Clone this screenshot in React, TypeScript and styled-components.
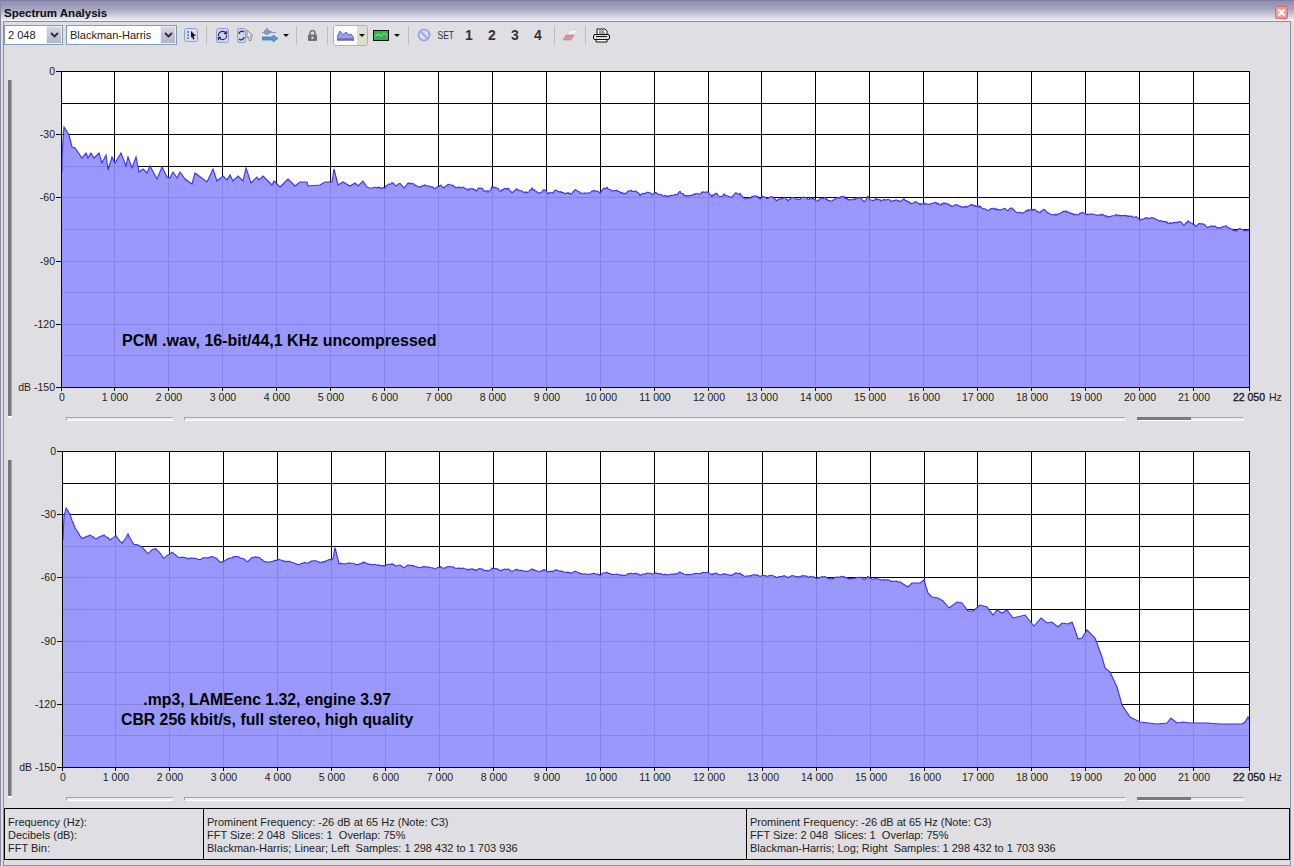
import React from "react";
import styled, { createGlobalStyle } from "styled-components";
import { RefreshCw } from "lucide-react";

const GlobalStyle = createGlobalStyle`
  html, body { margin: 0; padding: 0; background: #dfdfe3; }
  * { box-sizing: border-box; }
`;

const Win = styled.div`
  width: 1294px;
  height: 866px;
  overflow: hidden;
  display: flex;
  flex-direction: column;
  background: #dfdfe3;
  font-family: "Liberation Sans", Arial, sans-serif;
  font-size: 11px;
  color: #111;
  border-top: 1px solid #7c7ca6;
  border-left: 1px solid #8c8ca8;
`;

const TitleBar = styled.div`
  height: 20px;
  flex: none;
  display: flex;
  align-items: center;
  justify-content: space-between;
  padding: 4px 6px 0 3px;
  background: linear-gradient(to bottom, #8f8fae 0%, #a5a5bf 40%, #f2f2f6 100%);
`;

const Title = styled.span`
  font-weight: bold;
  font-size: 11.5px;
  color: #0c0c14;
`;

const CloseBtn = styled.div`
  width: 13px;
  height: 13px;
  margin-top: -2px;
  border: 1px solid #d86a6a;
  border-radius: 2px;
  background: #f39a9a;
  display: flex;
  align-items: center;
  justify-content: center;
`;

const Content = styled.div`
  flex: 1;
  margin-left: 2px;
  margin-right: 3px;
  border-top: 1px solid #8e8ea2;
  border-left: 1px solid #8e8ea2;
  border-right: 1px solid #8e8ea2;
  display: flex;
  flex-direction: column;
  min-height: 0;
`;

const Toolbar = styled.div`
  height: 26px;
  flex: none;
  display: flex;
  align-items: center;
  margin-bottom: 14px;
`;

const Combo = styled.div<{ $w: number; $ml?: number }>`
  width: ${(p) => p.$w}px;
  margin-left: ${(p) => p.$ml ?? 0}px;
  height: 20px;
  border: 1px solid #7f9db9;
  background: #fff;
  display: flex;
  align-items: center;
  justify-content: space-between;
  padding-left: 3px;
  color: #222;
  font-size: 11px;
`;

const ComboArrow = styled.div`
  width: 16px;
  height: 18px;
  background: linear-gradient(to bottom, #d5d5e2, #b4b4c6);
  border: 1px solid #eeeef5;
  display: flex;
  align-items: center;
  justify-content: center;
`;

const Slot = styled.div<{ $w: number; $ml: number }>`
  width: ${(p) => p.$w}px;
  margin-left: ${(p) => p.$ml}px;
  height: 20px;
  flex: none;
  display: flex;
  align-items: center;
  justify-content: center;
`;

const Sep = styled.div<{ $ml: number }>`
  width: 1px;
  height: 19px;
  margin-left: ${(p) => p.$ml}px;
  background: #bcbcc4;
  flex: none;
`;

const ToggleGroup = styled.div`
  width: 35px;
  height: 21px;
  margin-left: 5px;
  display: flex;
  border: 1px solid #b5b2a5;
  border-radius: 3px;
  overflow: hidden;
  flex: none;
`;

const ToggleMain = styled.div`
  width: 23px;
  background: #fff;
  display: flex;
  align-items: center;
  justify-content: center;
`;

const ToggleCaret = styled.div`
  flex: 1;
  background: #dfddd0;
  display: flex;
  align-items: center;
  justify-content: center;
`;

const Caret = styled.div<{ $ml?: number }>`
  width: 0;
  height: 0;
  flex: none;
  margin-left: ${(p) => p.$ml ?? 0}px;
  border-left: 3px solid transparent;
  border-right: 3px solid transparent;
  border-top: 3px solid #111;
`;

const SetLabel = styled.span`
  font-size: 10px;
  color: #333;
  transform: scaleX(0.85);
`;

const Digit = styled.span`
  font-weight: bold;
  font-size: 14px;
  color: #33333c;
`;

const ChartBlock = styled.div<{ $mb: number }>`
  height: 359px;
  flex: none;
  margin-bottom: ${(p) => p.$mb}px;
  display: flex;
  padding-left: 4px;
`;

const VScroll = styled.div`
  width: 4px;
  height: 338px;
  margin-top: 18px;
  flex: none;
  background: linear-gradient(to right, #777 0 75%, #a8a8a8 75% 100%);
  border-bottom: 2px solid #fff;
`;

const ChartColumn = styled.div`
  flex: 1;
  min-width: 0;
  display: flex;
  flex-direction: column;
`;

const ChartArea = styled.div`
  position: relative;
  height: 345px;
`;

const ChartSvg = styled.svg`
  display: block;
  width: 100%;
  height: 100%;
  font-family: "Liberation Sans", Arial, sans-serif;
`;

const AxisText = styled.text<{ $strong?: boolean }>`
  font-size: 10.5px;
  fill: #1c1c1c;
  stroke: ${(p) => (p.$strong ? "#1c1c1c" : "none")};
  stroke-width: 0.35px;
`;

const Note = styled.div<{ $left: number; $top: number; $size: number }>`
  position: absolute;
  left: ${(p) => p.$left}px;
  top: ${(p) => p.$top}px;
  font-size: ${(p) => p.$size}px;
  line-height: 20px;
  font-weight: bold;
  color: #000;
  text-align: center;
  white-space: nowrap;
`;

const ScrollRow = styled.div`
  display: flex;
  gap: 11px;
  margin-top: 10px;
  padding-left: 54px;
`;

const Track = styled.div<{ $w: number }>`
  position: relative;
  width: ${(p) => p.$w}px;
  height: 4px;
  background: #eeeeee;
  border-top: 1px solid #a4a4a4;
  border-left: 1px solid #a4a4a4;
  border-right: 1px solid #fff;
  border-bottom: 1px solid #fff;
`;

const Thumb = styled.div`
  position: absolute;
  left: -1px;
  top: -1px;
  width: 54px;
  height: 3px;
  background: #7b7b7b;
`;

const StatusBar = styled.div`
  height: 52px;
  flex: none;
  display: grid;
  grid-template-columns: 199px 543px 1fr;
  border-top: 1px solid #000;
  border-bottom: 1px solid #000;
  border-left: 1px solid #000;
`;

const StatusCell = styled.div`
  padding: 7px 0 0 3px;
  border-right: 1px solid #000;
  line-height: 13px;
  font-size: 11px;
  color: #222;
  white-space: pre;
`;

const WindowBottom = styled.div`
  flex: 1;
  border-bottom: 1px solid #8e8ea2;
`;

// px keypoints of the curves, screen coordinates
const KEYS_A: number[][] = [
  [62, 172], [62, 158], [63, 140], [64, 127], [69, 135], [72, 147], [75, 148], [82, 158], [86, 153], [88, 158], [91, 153], [94, 158], [99, 153], [102, 163], [106, 155], [108, 170], [112, 157], [115, 163], [121, 153], [126, 166], [128, 157], [132, 168], [136, 157], [139, 172], [143, 169], [147, 173], [150, 166], [157, 179], [162, 167], [167, 177], [170, 178], [173, 172], [177, 178], [180, 172], [185, 179], [192, 184], [195, 173], [207, 182], [213, 169], [217, 181], [223, 176], [227, 180], [230, 175], [233, 181], [238, 176], [243, 181], [246, 168], [251, 183], [257, 177], [259, 180], [263, 176], [272, 185], [274, 181], [280, 187], [288, 179], [295, 186], [300, 182], [307, 182], [308, 186], [320, 185], [325, 182], [332, 182], [334, 169], [338, 185], [343, 182], [350, 186], [355, 183], [358, 186], [363, 181], [367, 187],
  [400, 185], [430, 186], [500, 190], [560, 192], [615, 190], [660, 195], [705, 193], [760, 198], [800, 199], [850, 198], [900, 201], [950, 205], [1000, 209], [1060, 213], [1100, 215], [1150, 219], [1200, 225], [1240, 229], [1250, 231],
];

const KEYS_B: number[][] = [
  [63, 540], [64, 515], [66, 508], [70, 514], [75, 528], [82, 538], [90, 535], [96, 540], [104, 535], [110, 541], [116, 536], [122, 542], [128, 535], [134, 545], [142, 546], [148, 552], [156, 548], [164, 557], [172, 553], [180, 557], [190, 559], [200, 560], [212, 556], [222, 562], [235, 557], [246, 561], [256, 558], [268, 563], [280, 560], [296, 565], [310, 562], [325, 562], [333, 560], [335, 549], [339, 564], [360, 563],
  [400, 566], [450, 568], [500, 570], [560, 571], [600, 574], [660, 574], [710, 573], [760, 576], [820, 577], [870, 578],
  [900, 582], [908, 587], [912, 583], [920, 583], [924, 580], [928, 593], [932, 597], [938, 598], [943, 601], [949, 608], [957, 602], [962, 603], [968, 611], [973, 611], [980, 605], [987, 607], [993, 615], [997, 610], [1002, 613], [1007, 610], [1013, 618], [1025, 615], [1034, 626], [1041, 618], [1047, 623], [1052, 622], [1058, 627], [1062, 623], [1068, 624], [1072, 622], [1075, 630], [1078, 639], [1082, 638], [1087, 630], [1095, 638], [1102, 657], [1105, 668], [1110, 672], [1117, 687], [1122, 705], [1130, 717], [1140, 722], [1157, 724], [1167, 723], [1171, 718], [1177, 723], [1183, 722], [1190, 723], [1207, 723], [1220, 724], [1242, 724], [1245, 722], [1248, 717], [1250, 721],
];

const rnd = (n: number) => {
  const s = Math.sin(n * 12.9898) * 43758.5453;
  return s - Math.floor(s);
};

// value noise, wobble of about 4px with a little fine grain on top
const wobble = (x: number) => {
  const cell = Math.floor(x / 4);
  const t = (x - cell * 4) / 4;
  const base = rnd(cell) * (1 - t) + rnd(cell + 1) * t;
  return base - 0.5 + (rnd(x * 3) - 0.5) * 0.3;
};

const buildCurve = (keys: number[][], noiseFrom: number, noiseTo: number, amp: number) => {
  const out: number[][] = [];
  for (let i = 0; i < keys.length - 1; i++) {
    const [x0, y0] = keys[i];
    const [x1, y1] = keys[i + 1];
    if (x0 >= noiseFrom && x1 <= noiseTo) {
      for (let x = x0; x < x1; x += 1) {
        const y = y0 + ((y1 - y0) * (x - x0)) / (x1 - x0);
        out.push([x, y + wobble(x) * amp * 2]);
      }
    } else {
      out.push([x0, y0]);
    }
  }
  out.push(keys[keys.length - 1]);
  return out;
};

const Spectrum = ({ keys, left, top, noise, id }: { keys: number[][]; left: number; top: number; noise: [number, number, number]; id: string }) => {
  const right = 1249;
  const bottom = top + 316;
  const step = (1250 - left) / 22.05;
  const curve = buildCurve(keys, noise[0], noise[1], noise[2]);
  const line = curve.map((p) => `${p[0]},${p[1].toFixed(1)}`).join(" ");
  const area = `${left},${bottom} ${line} ${right},${bottom}`;
  const vs = Array.from({ length: 22 }, (_, i) => Math.floor(left + step * (i + 1)));
  const hs = Array.from({ length: 9 }, (_, i) => Math.round(top + (316 / 10) * (i + 1)));
  const grid = (color: string) => (
    <g stroke={color} strokeWidth="1" shapeRendering="crispEdges">
      {vs.slice(0, 21).map((x) => (
        <line key={x} x1={x + 0.5} x2={x + 0.5} y1={top} y2={bottom} />
      ))}
      {hs.map((y) => (
        <line key={y} x1={left} x2={right} y1={y + 0.5} y2={y + 0.5} />
      ))}
    </g>
  );
  const format = (n: number) => `${n} 000`;

  return (
    <ChartSvg viewBox={`12 ${top - 9} 1278 345`}>
      <defs>
        <clipPath id={id}>
          <polygon points={area} />
        </clipPath>
      </defs>
      <rect x={left} y={top} width={right - left} height={316} fill="#fff" />
      {grid("#000")}
      <polygon points={area} fill="#9b98fd" />
      <g clipPath={`url(#${id})`}>{grid("#8785e4")}</g>
      <polyline points={line} fill="none" stroke="#3a30f2" strokeWidth="1.1" />
      <rect x={left + 0.5} y={top + 0.5} width={right - left} height={316} fill="none" stroke="#000" strokeWidth="1" shapeRendering="crispEdges" />
      <g stroke="#000" shapeRendering="crispEdges">
        {[0, 2, 4, 6, 8, 10].map((i) => (
          <line key={i} x1={left - 5} x2={left} y1={top + 31.6 * i + 0.5} y2={top + 31.6 * i + 0.5} />
        ))}
        {[left, ...vs.slice(0, 21), right].map((x) => (
          <line key={x} x1={x + 0.5} x2={x + 0.5} y1={bottom} y2={bottom + 4} />
        ))}
      </g>
      {["0", "-30", "-60", "-90", "-120", "dB -150"].map((t, i) => (
        <AxisText key={t} x={left - 6} y={top + 63.2 * i + 4} textAnchor="end">
          {t}
        </AxisText>
      ))}
      {vs.slice(0, 21).map((x, i) => (
        <AxisText key={x} x={x + 1} y={bottom + 14} textAnchor="middle">
          {format(i + 1)}
        </AxisText>
      ))}
      <AxisText x={left + 1} y={bottom + 14} textAnchor="middle">0</AxisText>
      <AxisText $strong x={1249} y={bottom + 14} textAnchor="middle">22 050</AxisText>
      <AxisText x={1269} y={bottom + 14}>Hz</AxisText>
    </ChartSvg>
  );
};

const Chevron = () => (
  <svg width="9" height="6" viewBox="0 0 9 6">
    <path d="M1 1l3.5 3.5L8 1" fill="none" stroke="#2a2a3a" strokeWidth="1.8" />
  </svg>
);

const SelectIcon = () => (
  <svg width="14" height="14" viewBox="0 0 14 14">
    <rect x=".5" y=".5" width="13" height="13" rx="2" fill="#d6dcf6" stroke="#8e9ce0" />
    <path d="M3 4h2M3 7h2M3 10h2" stroke="#444" />
    <path d="M7 3l5 5H9.500l1 3-1.500.500-1-3L7 10z" fill="#111" />
  </svg>
);

const RefreshBox = () => (
  <svg width="13" height="15" viewBox="0 0 13 15">
    <rect x=".5" y=".5" width="12" height="14" rx="2" fill="#cfd6f4" stroke="#8e9ce0" />
    <foreignObject x="1" y="2" width="11" height="11">
      <RefreshCw size={11} color="#2c2c48" strokeWidth={2.6} />
    </foreignObject>
  </svg>
);

const RefreshCursor = () => (
  <svg width="17" height="15" viewBox="0 0 17 15">
    <rect x=".5" y=".5" width="8" height="14" rx="1.500" fill="#cfd6f4" stroke="#8e9ce0" />
    <path d="M2 6a3 3 0 0 1 5-2M7 9a3 3 0 0 1-5 2" fill="none" stroke="#2c2c48" strokeWidth="1.300" />
    <path d="M10 2l6 6h-2.500l1 4-2 1-1-4L10 10z" fill="#e8e8ee" stroke="#8a8a94" />
  </svg>
);

const WaveArrow = () => (
  <svg width="16" height="15" viewBox="0 0 16 15">
    <path d="M1 5v-1M3 6V2M5 7V0M7 6V2M9 5V3M11 5V4M13 5V4" stroke="#2c49a8" />
    <path d="M0 9h11V7l5 3.500L11 14v-2H0z" fill="#4f9ae0" stroke="#2c6ab0" strokeWidth=".6" />
  </svg>
);

const LockIcon = () => (
  <svg width="9" height="11" viewBox="0 0 9 11">
    <path d="M2 5V3a2.500 2.500 0 0 1 5 0v2" fill="none" stroke="#6a6a72" strokeWidth="1.400" />
    <rect x="0" y="4.500" width="9" height="6.500" rx="1" fill="#6e6e76" />
    <rect x="3.500" y="6.500" width="2" height="2.500" fill="#d8d8dc" />
  </svg>
);

const GraphIcon = () => (
  <svg width="17" height="12" viewBox="0 0 17 12">
    <path d="M0 8L3 2l3 3.500L9 3l3 3 2-1 3 4v1H0z" fill="#9c9cea" stroke="#3a3ab0" strokeWidth=".7" />
    <path d="M0 11h17" stroke="#223" strokeWidth="1.200" />
  </svg>
);

const GreenIcon = () => (
  <svg width="16" height="11" viewBox="0 0 16 11">
    <rect x=".5" y=".5" width="15" height="10" fill="#35b24a" stroke="#111" />
    <path d="M2 7l3-3 3 2 3-3 3 2" fill="none" stroke="#a8e0a8" />
  </svg>
);

const NoIcon = () => (
  <svg width="14" height="14" viewBox="0 0 14 14">
    <circle cx="7" cy="7" r="5.500" fill="none" stroke="#9aa8ec" strokeWidth="2" />
    <path d="M3 3l8 8" stroke="#9aa8ec" strokeWidth="2" />
  </svg>
);

const Eraser = () => (
  <svg width="15" height="12" viewBox="0 0 15 12">
    <path d="M8 1h7l-4 5H3z" fill="#f4f4f6" stroke="#c8c8d0" strokeWidth=".6" />
    <path d="M3 6h8l-3 5H0z" fill="#dc93a0" stroke="#c47c8a" strokeWidth=".6" />
  </svg>
);

const Printer = () => (
  <svg width="17" height="15" viewBox="0 0 17 15">
    <path d="M4 6V1h8l2 2v3" fill="#fff" stroke="#111" />
    <path d="M6 3h5M6 5h6" stroke="#111" strokeWidth=".8" />
    <rect x=".5" y="6.500" width="16" height="5" rx="1.500" fill="#ddd" stroke="#111" />
    <path d="M3 8.500h11" stroke="#111" />
    <path d="M3 11.500h11V14H3z" fill="#fff" stroke="#111" />
  </svg>
);

const App = () => (
  <>
    <GlobalStyle />
    <Win>
      <TitleBar>
        <Title>Spectrum Analysis</Title>
        <CloseBtn>
          <svg width="9" height="9" viewBox="0 0 9 9">
            <path d="M1.500 1.500l6 6M7.500 1.500l-6 6" stroke="#fff" strokeWidth="2.400" />
          </svg>
        </CloseBtn>
      </TitleBar>
      <Content>
        <Toolbar>
          <Combo $w={59}>
            2 048
            <ComboArrow><Chevron /></ComboArrow>
          </Combo>
          <Combo $w={111} $ml={3}>
            Blackman-Harris
            <ComboArrow><Chevron /></ComboArrow>
          </Combo>
          <Slot $w={14} $ml={7}><SelectIcon /></Slot>
          <Sep $ml={8} />
          <Slot $w={13} $ml={9}><RefreshBox /></Slot>
          <Slot $w={17} $ml={8}><RefreshCursor /></Slot>
          <Slot $w={16} $ml={8}><WaveArrow /></Slot>
          <Caret $ml={5} />
          <Sep $ml={7} />
          <Slot $w={12} $ml={9}><LockIcon /></Slot>
          <Sep $ml={9} />
          <ToggleGroup>
            <ToggleMain><GraphIcon /></ToggleMain>
            <ToggleCaret><Caret /></ToggleCaret>
          </ToggleGroup>
          <Slot $w={16} $ml={5}><GreenIcon /></Slot>
          <Caret $ml={5} />
          <Sep $ml={8} />
          <Slot $w={14} $ml={8}><NoIcon /></Slot>
          <Slot $w={16} $ml={7}><SetLabel>SET</SetLabel></Slot>
          <Slot $w={10} $ml={10}><Digit>1</Digit></Slot>
          <Slot $w={10} $ml={13}><Digit>2</Digit></Slot>
          <Slot $w={10} $ml={13}><Digit>3</Digit></Slot>
          <Slot $w={10} $ml={13}><Digit>4</Digit></Slot>
          <Sep $ml={11} />
          <Slot $w={15} $ml={8}><Eraser /></Slot>
          <Sep $ml={7} />
          <Slot $w={17} $ml={7}><Printer /></Slot>
        </Toolbar>

        <ChartBlock $mb={21}>
          <VScroll />
          <ChartColumn>
            <ChartArea>
              <Spectrum keys={KEYS_A} left={61} top={71} noise={[367, 1250, 2.6]} id="clipA" />
              <Note $left={110} $top={269} $size={16}>PCM .wav, 16-bit/44,1 KHz uncompressed</Note>
            </ChartArea>
            <ScrollRow>
              <Track $w={107} />
              <Track $w={942} />
              <Track $w={107}><Thumb /></Track>
            </ScrollRow>
          </ChartColumn>
        </ChartBlock>

        <ChartBlock $mb={7}>
          <VScroll />
          <ChartColumn>
            <ChartArea>
              <Spectrum keys={KEYS_B} left={62} top={451} noise={[64, 900, 1.5]} id="clipB" />
              <Note $left={109} $top={248} $size={15.8}>
                .mp3, LAMEenc 1.32, engine 3.97
                <br />
                CBR 256 kbit/s, full stereo, high quality
              </Note>
            </ChartArea>
            <ScrollRow>
              <Track $w={107} />
              <Track $w={942} />
              <Track $w={107}><Thumb /></Track>
            </ScrollRow>
          </ChartColumn>
        </ChartBlock>

        <StatusBar>
          <StatusCell>{"Frequency (Hz):\nDecibels (dB):\nFFT Bin:"}</StatusCell>
          <StatusCell>{"Prominent Frequency: -26 dB at 65 Hz (Note: C3)\nFFT Size: 2 048  Slices: 1  Overlap: 75%\nBlackman-Harris; Linear; Left  Samples: 1 298 432 to 1 703 936"}</StatusCell>
          <StatusCell>{"Prominent Frequency: -26 dB at 65 Hz (Note: C3)\nFFT Size: 2 048  Slices: 1  Overlap: 75%\nBlackman-Harris; Log; Right  Samples: 1 298 432 to 1 703 936"}</StatusCell>
        </StatusBar>
        <WindowBottom />
      </Content>
    </Win>
  </>
);

export default App;
